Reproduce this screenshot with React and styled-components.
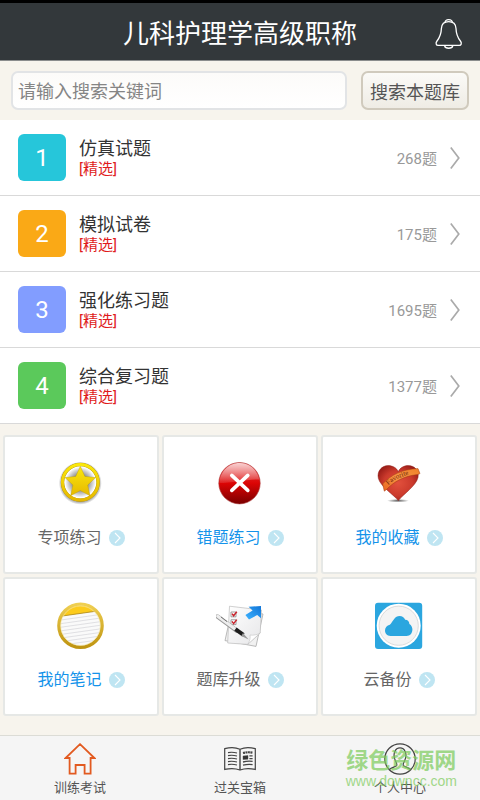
import React from "react";

import styled, { createGlobalStyle } from "styled-components";

const papers = [
	{ id: 1, title: "仿真试题", count: 268, color: "#26c6da" },
	{ id: 2, title: "模拟试卷", count: 175, color: "#faa916" },
	{ id: 3, title: "强化练习题", count: 1695, color: "#829dff" },
	{ id: 4, title: "综合复习题", count: 1377, color: "#5bc95b" },
];

const StarIcon = () => (
	<svg width="48" height="48" viewBox="0 0 48 48" aria-hidden="true">
		<defs>
			<linearGradient id="gold" x1="0" y1="0" x2="0" y2="1">
				<stop offset="0" stopColor="#fbe80c" />
				<stop offset="1" stopColor="#e6b800" />
			</linearGradient>
			<radialGradient id="starBack">
				<stop offset="0.35" stopColor="#777" />
				<stop offset="0.75" stopColor="#d8d8d8" />
				<stop offset="0.9" stopColor="#fff" />
			</radialGradient>
			<radialGradient id="starShadow">
				<stop offset="0.82" stopColor="#555" stopOpacity="0.7" />
				<stop offset="1" stopColor="#555" stopOpacity="0" />
			</radialGradient>
		</defs>
		<circle cx="23.3" cy="24.2" r="21.5" fill="url(#starShadow)" />
		<circle cx="23.3" cy="23.3" r="17" fill="url(#starBack)" />
		<circle cx="23.3" cy="23.3" r="17.8" fill="none" stroke="#a68a10" strokeWidth="3.4" />
		<circle cx="23.3" cy="23.3" r="17.8" fill="none" stroke="url(#gold)" strokeWidth="3" />
		<path
			d="M23.3 7.3 L27.9 17.4 L38.6 18.6 L30.7 26.1 L33 36.8 L23.3 31.6 L13.6 36.8 L15.9 26.1 L8 18.6 L18.7 17.4 Z"
			fill="url(#gold)"
			stroke="#b89a00"
			strokeWidth="0.4"
		/>
	</svg>
);

const WrongIcon = () => (
	<svg width="48" height="48" viewBox="0 0 48 48" aria-hidden="true">
		<defs>
			<linearGradient id="red" x1="0" y1="0" x2="0" y2="1">
				<stop offset="0" stopColor="#e64848" />
				<stop offset="0.5" stopColor="#dc0505" />
				<stop offset="1" stopColor="#7a0000" />
			</linearGradient>
			<linearGradient id="gloss" x1="0" y1="0" x2="0" y2="1">
				<stop offset="0" stopColor="#fff" stopOpacity="0.75" />
				<stop offset="1" stopColor="#fff" stopOpacity="0.1" />
			</linearGradient>
		</defs>
		<circle cx="23.5" cy="24.2" r="20.7" fill="url(#red)" stroke="#a33" strokeWidth="0.6" />
		<path d="M3.5 24 A20 20 0 0 1 43.2 20.5 C32 20 16 24 3.5 24 Z" fill="url(#gloss)" />
		<path d="M15.8 16.4 L31.8 31.4 M31.8 16.4 L15.8 31.4" stroke="#fff" strokeWidth="3.6" strokeLinecap="round" />
	</svg>
);

const HeartIcon = () => (
	<svg width="48" height="48" viewBox="0 0 48 48" aria-hidden="true">
		<defs>
			<radialGradient id="heart" cx="0.5" cy="0.5" r="0.6">
				<stop offset="0" stopColor="#e2503c" />
				<stop offset="0.6" stopColor="#cb3a2c" />
				<stop offset="1" stopColor="#951a16" />
			</radialGradient>
			<radialGradient id="heartShadow">
				<stop offset="0" stopColor="#333" stopOpacity="0.8" />
				<stop offset="1" stopColor="#333" stopOpacity="0" />
			</radialGradient>
			<linearGradient id="ribbon" x1="0" y1="1" x2="1" y2="0">
				<stop offset="0" stopColor="#e8641c" />
				<stop offset="0.5" stopColor="#f79545" />
				<stop offset="1" stopColor="#f08027" />
			</linearGradient>
			<path id="ribbonLine" d="M13.4 26.2 C19 20.8 26 17 41 14" />
		</defs>
		<ellipse cx="23" cy="41.7" rx="11" ry="1.8" fill="url(#heartShadow)" />
		<path
			d="M23.3 41.6 C19 36 5.5 27.5 3.4 19.5 C1.6 12 7 6.6 13 6.6 C18 6.6 21.5 9 23.3 12.6 C25 9 28.5 6.6 33.3 6.6 C40 6.6 44.3 12 43 18.5 C41 27 28.5 35 23.3 41.6 Z"
			fill="url(#heart)"
			stroke="#8e1a15"
			strokeWidth="0.5"
		/>
		<path
			d="M7.6 25 C16 16 27 10.2 43 9.6 L45 14.6 L42.5 15.6 C29 17 19 22.6 11.6 30.4 L9.3 32.2 Z"
			fill="url(#ribbon)"
			stroke="#a23b10"
			strokeWidth="0.5"
		/>
		<text fill="#6e2408" fontSize="7" fontFamily="'Liberation Serif', serif">
			<textPath href="#ribbonLine">Favorite</textPath>
		</text>
	</svg>
);

const NoteIcon = () => (
	<svg width="48" height="48" viewBox="0 0 48 48" aria-hidden="true">
		<defs>
			<linearGradient id="noteRing" x1="0" y1="0" x2="0" y2="1">
				<stop offset="0" stopColor="#efcf52" />
				<stop offset="1" stopColor="#bf9410" />
			</linearGradient>
			<clipPath id="noteClip">
				<circle cx="23.5" cy="24.7" r="20.5" />
			</clipPath>
		</defs>
		<circle cx="23.5" cy="24.7" r="20.5" fill="#fafafa" />
		<g clipPath="url(#noteClip)">
			<path d="M0 0 H48 V9 L4 15.2 L0 16 Z" fill="#fccb1c" />
			<path d="M4 15.2 L42 9.8" stroke="#a98414" strokeWidth="0.8" />
			<path
				d="M2 19.3 L46 13.1 M2 22.9 L46 16.7 M2 26.5 L46 20.3 M2 30.1 L46 23.9 M2 33.7 L46 27.5 M2 37.3 L46 31.1 M2 40.9 L46 34.7 M2 44.5 L46 38.3"
				stroke="#dcdce0"
				strokeWidth="0.9"
			/>
		</g>
		<circle cx="23.5" cy="24.7" r="21.6" fill="none" stroke="url(#noteRing)" strokeWidth="3.4" />
		<circle cx="23.5" cy="24.7" r="19.7" fill="none" stroke="#f7e9ae" strokeWidth="0.6" />
	</svg>
);

const UpgradeIcon = () => (
	<svg width="48" height="48" viewBox="0 0 48 48" aria-hidden="true">
		<defs>
			<linearGradient id="sheet" x1="0" y1="0" x2="1" y2="1">
				<stop offset="0" stopColor="#fff" />
				<stop offset="1" stopColor="#e6e6e8" />
			</linearGradient>
			<linearGradient id="blueArrow" x1="1" y1="0" x2="0" y2="1">
				<stop offset="0" stopColor="#0f74d8" />
				<stop offset="1" stopColor="#3fb4ff" />
			</linearGradient>
		</defs>
		<path d="M16 8 L47 13 L40 45.4 L9 39.6 Z" fill="#f1f1f1" stroke="#aaa" strokeWidth="0.8" />
		<path d="M13.5 5.2 L45.5 9 L44.2 32 L31.6 43.4 L11.7 42 Z" fill="url(#sheet)" stroke="#bbb" strokeWidth="0.7" />
		<path d="M44.2 32 L31.6 43.4 C34 40 34.5 37 34 34 C37 34.5 41 34 44.2 32 Z" fill="#fff" stroke="#bbb" strokeWidth="0.5" />
		<path d="M15 11 H20 V15.8 H15 Z M15 18.8 H20 V23.6 H15 Z" fill="#fff" stroke="#888" strokeWidth="0.8" />
		<path d="M16 12.6 L17.6 14.8 L20.8 10.8 M16 20.4 L17.6 22.6 L20.8 18.6" fill="none" stroke="#c8232c" strokeWidth="1.5" />
		<path d="M45 5 L45 17.2 L41.2 14 L33 18.4 L29.4 14 L36.6 9.4 L32.6 5.8 Z" fill="url(#blueArrow)" />
		<path d="M1.5 15.5 L20.5 29.6" stroke="#999" strokeWidth="4.4" strokeLinecap="round" />
		<path d="M1.7 15.2 L20.8 29.2" stroke="#eee" strokeWidth="3" strokeLinecap="round" />
		<path d="M5 16 L11 20.6" stroke="#666" strokeWidth="0.9" />
		<path d="M19.4 28.2 L27.4 33.8" stroke="#1c1c1c" strokeWidth="4" />
		<path d="M27 32 L32.6 38.4 L25.4 35 Z" fill="#999" />
	</svg>
);

const CloudIcon = () => (
	<svg width="48" height="48" viewBox="0 0 48 48" aria-hidden="true">
		<rect x="0" y="1.7" width="47.2" height="46.3" rx="3" fill="#2ba6df" />
		<circle cx="23.7" cy="24.7" r="22" fill="#fff" />
		<circle cx="23.7" cy="24.7" r="19.6" fill="#f4f4f4" stroke="#dcdcdc" strokeWidth="1" />
		<path
			d="M15.5 35 C12 35 10 32.6 10 29.6 C10 26.6 12 24.2 14.8 23.8 C16.2 22.6 17.4 20.2 19 18.2 C20.4 16 22.4 14.9 24.6 14.9 C27.2 14.9 29.2 16.4 30.2 18.8 C33 18.8 34.2 20.8 34.4 23 C36.4 24.2 37.4 26.4 37.4 28.6 C37.4 32.4 35 35 31.6 35 Z"
			fill="#2ba6df"
		/>
	</svg>
);

const HomeIcon = () => (
	<svg width="32" height="32" viewBox="0 0 32 32" fill="none" stroke="#e25a20" strokeWidth="1.8" aria-hidden="true">
		<path d="M16 1.2 L30.4 15 H26.6 V30.6 H20.6 V22 H11.6 V30.6 H5.6 V15 H1.6 Z" />
	</svg>
);

const BookIcon = () => (
	<svg width="32" height="32" viewBox="0 0 32 32" fill="none" stroke="#444" aria-hidden="true">
		<path d="M16 6.2 C12 4.4 6 4.2 0.7 5.6 V26.4 C6 25.2 12 25.4 16 27 C20 25.4 26 25.2 31.3 26.4 V5.6 C26 4.2 20 4.4 16 6.2 Z" strokeWidth="1.2" />
		<path d="M16 6.2 V27" strokeWidth="1.4" />
		<path d="M4 9.6 C7 9 10 9.2 13 10 M4 12.6 C7 12 10 12.2 13 13 M4 15.6 C7 15 10 15.2 13 16 M4 18.6 C7 18 10 18.2 13 19 M4 21.6 C7 21 10 21.2 13 22" strokeWidth="1.2" />
		<path d="M19 10 C22 9.2 25 9 28.6 9.6" strokeWidth="2.2" strokeDasharray="2 0.5" />
		<path d="M25.4 12.8 H28.6 M25.4 15.6 H28.6 M19 19 C22 18.2 25 18 28.6 18.4 M19 22.2 C22 21.4 25 21.2 28.6 21.6" strokeWidth="1.3" />
		<path d="M19 13 L24 12.4 V16.2 L19 16.6 Z" fill="#333" strokeWidth="0.4" />
	</svg>
);

const UserIcon = () => (
	<svg width="32" height="32" viewBox="0 0 32 32" fill="none" stroke="#444" strokeWidth="1.2" aria-hidden="true">
		<circle cx="16" cy="16" r="15.2" />
		<path d="M5.2 26.4 C8 24.4 11.6 23.8 12.6 22.6 C13.4 21.4 12.4 19.8 11.4 17.8 C10 14.8 9.6 11.4 10.8 8.6 C11.8 6 13.8 4.8 16 4.8 C18.2 4.8 20.2 6 21.2 8.6 C22.4 11.4 22 14.8 20.6 17.8 C19.6 19.8 18.6 21.4 19.4 22.6 C20.4 23.8 24 24.4 26.8 26.4" />
	</svg>
);

const BellIcon = () => (
	<svg width="28" height="32" viewBox="0 0 28 32" fill="none" stroke="#fff" strokeWidth="1.3" aria-hidden="true">
		<path d="M10 4.6 C10.2 2.6 11.6 1.6 13.7 1.6 C15.8 1.6 17.2 2.6 17.4 4.6" />
		<path d="M13.7 3.6 C9.2 3.6 6.6 6.4 6.4 10.4 C6.2 16.6 4.8 19.4 2 23 C0.4 25.2 1 27.4 3.2 27.4 H24.2 C26.4 27.4 27 25.2 25.4 23 C22.6 19.4 21.2 16.6 21 10.4 C20.8 6.4 18.2 3.6 13.7 3.6 Z" />
		<path d="M9.6 28 C10.4 31 17 31 17.8 28" />
	</svg>
);

const tools = [
	{ title: "专项练习", icon: <StarIcon /> },
	{ title: "错题练习", icon: <WrongIcon />, active: true },
	{ title: "我的收藏", icon: <HeartIcon />, active: true },
	{ title: "我的笔记", icon: <NoteIcon />, active: true },
	{ title: "题库升级", icon: <UpgradeIcon /> },
	{ title: "云备份", icon: <CloudIcon /> },
];

const tabs = [
	{ title: "训练考试", icon: <HomeIcon /> },
	{ title: "过关宝箱", icon: <BookIcon /> },
	{ title: "个人中心", icon: <UserIcon /> },
];

const App = () => {
	return (
		<Page>
			<GlobalStyle />
			<Header>
				<Title>儿科护理学高级职称</Title>
				<BellButton type="button" aria-label="通知">
					<BellIcon />
				</BellButton>
			</Header>
			<SearchBar onSubmit={(e) => e.preventDefault()}>
				<SearchInput type="text" aria-label="搜索" placeholder="请输入搜索关键词" />
				<SearchButton type="submit">搜索本题库</SearchButton>
			</SearchBar>
			<PaperList>
				{papers.map(({ id, title, count, color }) => (
					<li key={id}>
						<PaperRow href="#">
							<Badge $color={color}>{id}</Badge>
							<PaperText>
								<PaperTitle>{title}</PaperTitle>
								<PaperTag>[精选]</PaperTag>
							</PaperText>
							<PaperCount>{count}题</PaperCount>
							<svg width="10" height="22" viewBox="0 0 10 22" fill="none" aria-hidden="true">
								<path d="M0.8 0.6 L8.8 11 L0.8 21.4" stroke="#aaa" strokeWidth="1.7" />
							</svg>
						</PaperRow>
					</li>
				))}
			</PaperList>
			<ToolGrid>
				{tools.map(({ title, icon, active }) => (
					<ToolCard key={title} type="button">
						{icon}
						<ToolLabel $active={active}>
							{title}
							<svg width="16" height="16" viewBox="0 0 16 16" aria-hidden="true">
								<circle cx="8" cy="8" r="8" fill="#bfe5f2" />
								<path d="M6 3 L11 8 L6 13" fill="none" stroke="#fff" strokeWidth="1.1" />
							</svg>
						</ToolLabel>
					</ToolCard>
				))}
			</ToolGrid>
			<TabBar>
				{tabs.map(({ title, icon }) => (
					<Tab key={title} href="#">
						{icon}
						{title}
					</Tab>
				))}
				<Watermark>
					<strong>绿色资源网</strong>
					<span>www.downcc.com</span>
				</Watermark>
			</TabBar>
		</Page>
	);
};

export default App;

const GlobalStyle = createGlobalStyle`
	* {
		box-sizing: border-box;
	}

	body {
		margin: 0;
		background-color: #f7f4ed;
		font-family: Roboto, "Noto Sans CJK SC", sans-serif;
	}

	a {
		color: inherit;
		text-decoration: none;
	}

	button,
	input {
		font-family: inherit;
	}

	svg {
		display: block;
		flex-shrink: 0;
	}
`;

const Page = styled.div`
	display: flex;
	flex-direction: column;
	min-height: 100vh;
`;

const Header = styled.header`
	display: grid;
	grid-template-columns: 1fr auto 1fr;
	align-items: center;
	height: 61px;
	padding: 4px 17px 0;
	border-top: 3px solid #000;
	border-bottom: 1px solid #8b8d8d;
	background-color: #33383b;
	color: #fff;
`;

const Title = styled.h1`
	grid-column: 2;
	margin: 0;
	font-size: 26px;
	font-weight: 400;
	line-height: 36px;
`;

const BellButton = styled.button`
	justify-self: end;
	padding: 0;
	border: none;
	background: none;
`;

const SearchBar = styled.form`
	display: flex;
	gap: 14px;
	padding: 10px 11px;
`;

const SearchInput = styled.input`
	flex: 1;
	min-width: 0;
	height: 39px;
	padding: 2px 5px 0;
	border: 2px solid #e2e4e6;
	border-radius: 7px;
	background: linear-gradient(#fcfbf9, #fff);
	color: #333;
	font-size: 18px;

	&::placeholder {
		color: #858585;
	}
`;

const SearchButton = styled.button`
	height: 39px;
	padding: 0 7px;
	border: 2px solid #d0cabd;
	border-radius: 7px;
	background: linear-gradient(#fbfaf7, #efece5);
	color: #555;
	font-size: 18px;
`;

const PaperList = styled.ul`
	margin: 0;
	padding: 0;
	list-style: none;
`;

const PaperRow = styled.a`
	display: flex;
	align-items: center;
	gap: 13px;
	height: 76px;
	padding: 0 20px 0 18px;
	border-bottom: 1px solid #d9d9d9;
	background-color: #fff;
`;

const Badge = styled.span`
	width: 48px;
	height: 47px;
	border-radius: 6px;
	background-color: ${({ $color }) => $color};
	color: #fff;
	font-size: 24px;
	line-height: 48px;
	text-align: center;
`;

const PaperText = styled.div`
	flex: 1;
`;

const PaperTitle = styled.div`
	color: #333;
	font-size: 18px;
	line-height: 22px;
`;

const PaperTag = styled.div`
	color: #e01b1b;
	font-size: 15px;
	line-height: 18px;
`;

const PaperCount = styled.span`
	color: #999;
	font-size: 15px;
`;

const ToolGrid = styled.div`
	display: grid;
	grid-template-columns: repeat(3, 1fr);
	gap: 3px;
	padding: 11px 3px;
`;

const ToolCard = styled.button`
	display: flex;
	flex-direction: column;
	align-items: center;
	gap: 20px;
	height: 139px;
	padding: 22px 0 0;
	border: 2px solid #e6e8e6;
	border-radius: 3px;
	background-color: #fff;
`;

const ToolLabel = styled.span`
	display: flex;
	align-items: center;
	gap: 7px;
	color: ${({ $active }) => ($active ? "#1493ea" : "#666")};
	font-size: 16px;
	line-height: 22px;
`;

const TabBar = styled.nav`
	position: relative;
	display: grid;
	grid-template-columns: repeat(3, 1fr);
	margin-top: auto;
	border-top: 1px solid #dcdcd6;
	background-color: #f5f5f5;
`;

const Tab = styled.a`
	display: flex;
	flex-direction: column;
	align-items: center;
	gap: 4px;
	padding: 7px 0 3px;
	color: #555;
	font-size: 13px;
	line-height: 18px;
`;

const Watermark = styled.div`
	position: absolute;
	top: 13px;
	right: 23px;
	display: flex;
	flex-direction: column;
	align-items: center;
	color: #7ccb5a;
	opacity: 0.7;
	pointer-events: none;

	strong {
		font-size: 22px;
		line-height: 24px;
	}

	span {
		font-family: "Liberation Sans", sans-serif;
		font-size: 14px;
		line-height: 16px;
	}
`;
